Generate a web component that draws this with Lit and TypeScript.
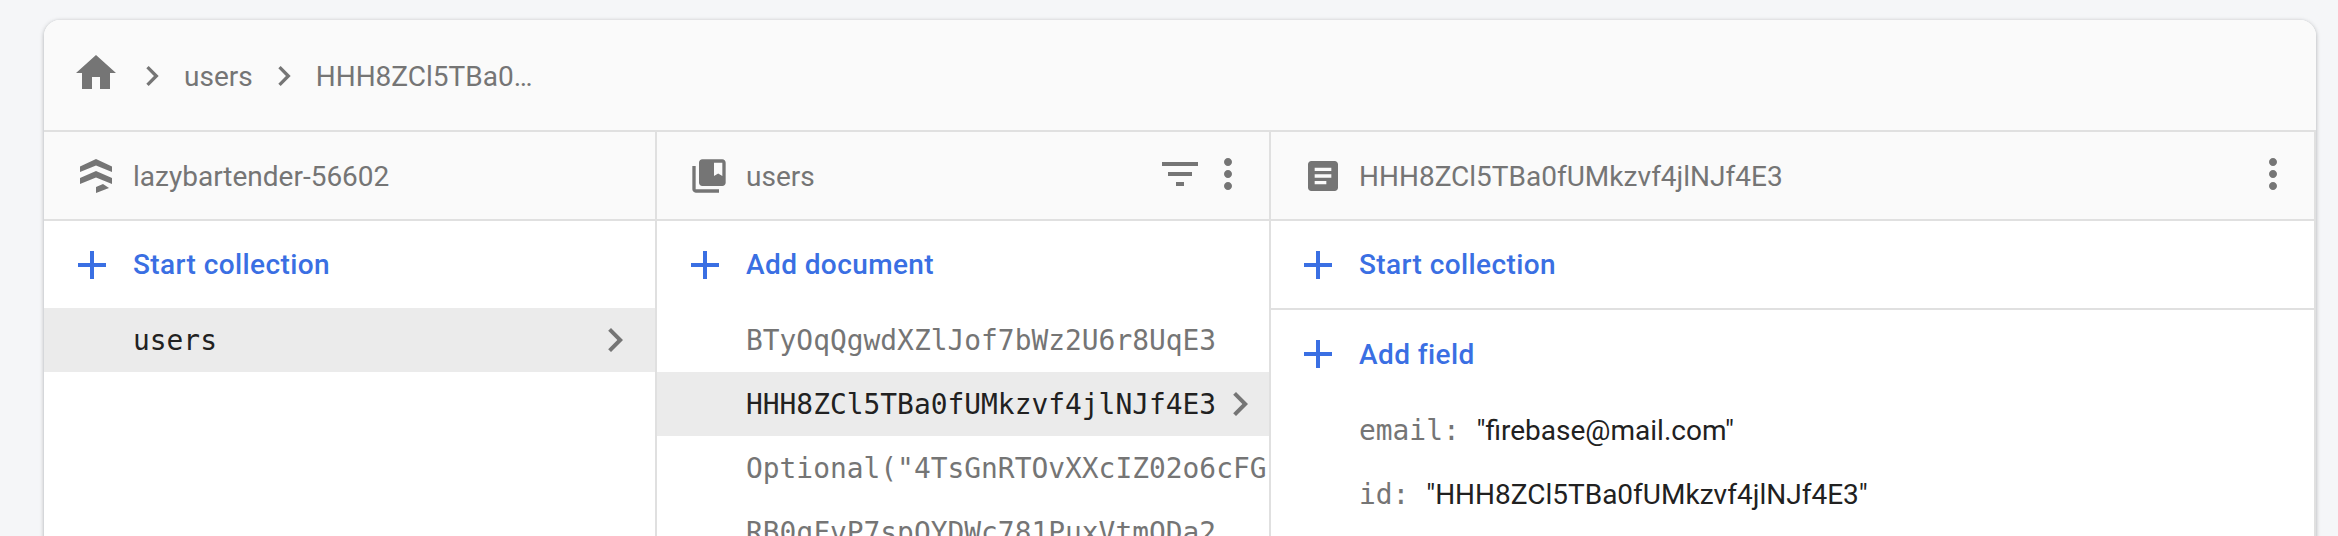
import { LitElement, html, css, svg } from 'lit';
import { customElement } from 'lit/decorators.js';

const ICONS = {
  home: svg`<path d="M10 20v-6h4v6h5v-8h3L12 3 2 12h3v8z"/>`,
  chevron: svg`<path d="M10 6L8.59 7.41 13.17 12l-4.58 4.59L10 18l6-6z"/>`,
  plus: svg`<path d="M19 13h-6v6h-2v-6H5v-2h6V5h2v6h6v2z"/>`,
  filter: svg`<path d="M10 18h4v-2h-4v2zM3 6v2h18V6H3zm3 7h12v-2H6v2z"/>`,
  more: svg`<path d="M12 8c1.1 0 2-.9 2-2s-.9-2-2-2-2 .9-2 2 .9 2 2 2zm0 2c-1.1 0-2 .9-2 2s.9 2 2 2 2-.9 2-2-.9-2-2-2zm0 6c-1.1 0-2 .9-2 2s.9 2 2 2 2-.9 2-2-.9-2-2-2z"/>`,
  collection: svg`<path d="M4 6H2v14c0 1.1.9 2 2 2h14v-2H4V6zm16-4H8c-1.1 0-2 .9-2 2v12c0 1.1.9 2 2 2h12c1.1 0 2-.9 2-2V4c0-1.1-.9-2-2-2zm0 10l-2.5-1.5L15 12V4h5v8z"/>`,
  doc: svg`<path d="M19 3H5c-1.1 0-2 .9-2 2v14c0 1.1.9 2 2 2h14c1.1 0 2-.9 2-2V5c0-1.1-.9-2-2-2zm-5 14H7v-2h7v2zm3-4H7v-2h10v2zm0-4H7V7h10v2z"/>`,
  // project mark, drawn on a 40 box
  project: svg`<path d="M4 7.5 20 0 36 7.5V13L20 6.5 4 13zM4 19 20 12 36 19V25L20 18.5 4 25zM20 28 27 25 33 29 20 34z"/>`,
};

const icon = (name: keyof typeof ICONS, cls = 'i48') => {
  const box = name === 'project' ? '0 0 40 34' : '0 0 24 24';
  return html`<svg class=${cls} viewBox=${box}>${ICONS[name]}</svg>`;
};

@customElement('app-root')
export class AppRoot extends LitElement {
  static styles = css`
    :host {
      display: block;
      height: 536px;
      overflow: hidden;
      box-sizing: border-box;
      padding: 20px 22px 0 44px;
      background: #f5f6f8;
      font-family: Roboto, sans-serif;
      font-size: 28px;
      color: #757575;
    }

    svg { fill: currentColor; flex: none; display: block; }
    .i48 { width: 48px; height: 48px; }
    .i40 { width: 40px; height: 40px; }
    .mark { width: 40px; height: 34px; }

    .card {
      height: 600px;
      background: #fff;
      border-radius: 16px 16px 0 0;
      box-shadow: 0 1px 4px rgba(60, 64, 67, 0.4);
      overflow: hidden;
      display: flex;
      flex-direction: column;
    }

    .crumbs {
      height: 110px;
      flex: none;
      background: #fafafa;
      border-bottom: 2px solid #e0e0e0;
      display: flex;
      align-items: center;
      padding: 0 0 0 28px;
    }
    .crumbs .home { margin-top: -4px; margin-right: 12px; }
    .crumbs .sep { margin: 2px 12px 0 0; }
    .crumbs .text { margin: 2px 11px 0 0; white-space: nowrap; }

    .cols {
      flex: 1;
      display: grid;
      grid-template-columns: 613px 614px 1fr;
    }
    .col {
      min-width: 0;
      border-right: 2px solid #e0e0e0;
      --pad: 24px;
      --text: 89px;
    }
    .col.last { --pad: 23px; --text: 88px; }

    .head {
      height: 87px;
      background: #fafafa;
      border-bottom: 2px solid #e0e0e0;
      display: flex;
      align-items: center;
      padding-right: 17px;
    }
    .head .lead {
      width: var(--text);
      flex: none;
      box-sizing: border-box;
      padding-left: 15px;
      display: flex;
      justify-content: center;
    }
    .head .name { margin-top: 2px; white-space: nowrap; }
    .head .tools { margin-left: auto; display: flex; margin-top: -3px; }

    .action {
      height: 87px;
      display: flex;
      align-items: center;
      padding-left: var(--pad);
      color: #3a6fe3;
      font-weight: 500;
      letter-spacing: 0.4px;
    }
    .action svg { margin-right: 17px; }
    .action.ruled { border-bottom: 2px solid #e0e0e0; }
    .action.tall { height: 88px; }

    .row {
      height: 64px;
      display: flex;
      align-items: center;
      padding-left: var(--text);
      font-family: 'DejaVu Sans Mono', monospace;
      font-size: 27.9px;
      white-space: nowrap;
      overflow: hidden;
    }
    .row .id { flex: none; }
    .row svg { flex: none; color: #757575; margin-left: auto; }
    .row.on { background: #ebebeb; color: #212121; }
    .row.short svg { margin-right: 16px; }
    .row.wide svg { margin-right: 5px; }

    .field {
      height: 64px;
      display: flex;
      align-items: center;
      padding-left: var(--text);
      white-space: nowrap;
    }
    .field .key {
      font-family: 'DejaVu Sans Mono', monospace;
      font-size: 27.9px;
      margin-right: 16.8px;
    }
    .field .val { color: #212121; }
  `;

  render() {
    const docId = 'HHH8ZCl5TBa0fUMkzvf4jlNJf4E3';
    return html`
      <div class="card">
        <div class="crumbs">
          ${icon('home', 'i48 home')}
          ${icon('chevron', 'i40 sep')}
          <span class="text">users</span>
          ${icon('chevron', 'i40 sep')}
          <span class="text">HHH8ZCl5TBa0…</span>
        </div>
        <div class="cols">
          <section class="col">
            <div class="head">
              <span class="lead">${icon('project', 'mark')}</span>
              <span class="name">lazybartender-56602</span>
            </div>
            <div class="action">${icon('plus')}Start collection</div>
            <div class="row on short"><span class="id">users</span>${icon('chevron')}</div>
          </section>

          <section class="col">
            <div class="head">
              <span class="lead">${icon('collection', 'i40')}</span>
              <span class="name">users</span>
              <span class="tools">${icon('filter')}${icon('more')}</span>
            </div>
            <div class="action">${icon('plus')}Add document</div>
            <div class="row"><span class="id">BTyOqQgwdXZlJof7bWz2U6r8UqE3</span></div>
            <div class="row on wide"><span class="id">${docId}</span>${icon('chevron')}</div>
            <div class="row"><span class="id">Optional("4TsGnRTOvXXcIZ02o6cFG-</span></div>
            <div class="row"><span class="id">RB0qFvP7spOYDWc781PuxVtmODa2</span></div>
          </section>

          <section class="col last">
            <div class="head">
              <span class="lead">${icon('doc', 'i40')}</span>
              <span class="name">${docId}</span>
              <span class="tools">${icon('more')}</span>
            </div>
            <div class="action ruled">${icon('plus')}Start collection</div>
            <div class="action tall">${icon('plus')}Add field</div>
            <div class="field"><span class="key">email:</span><span class="val">"firebase@mail.com"</span></div>
            <div class="field"><span class="key">id:</span><span class="val">"${docId}"</span></div>
          </section>
        </div>
      </div>
    `;
  }
}
